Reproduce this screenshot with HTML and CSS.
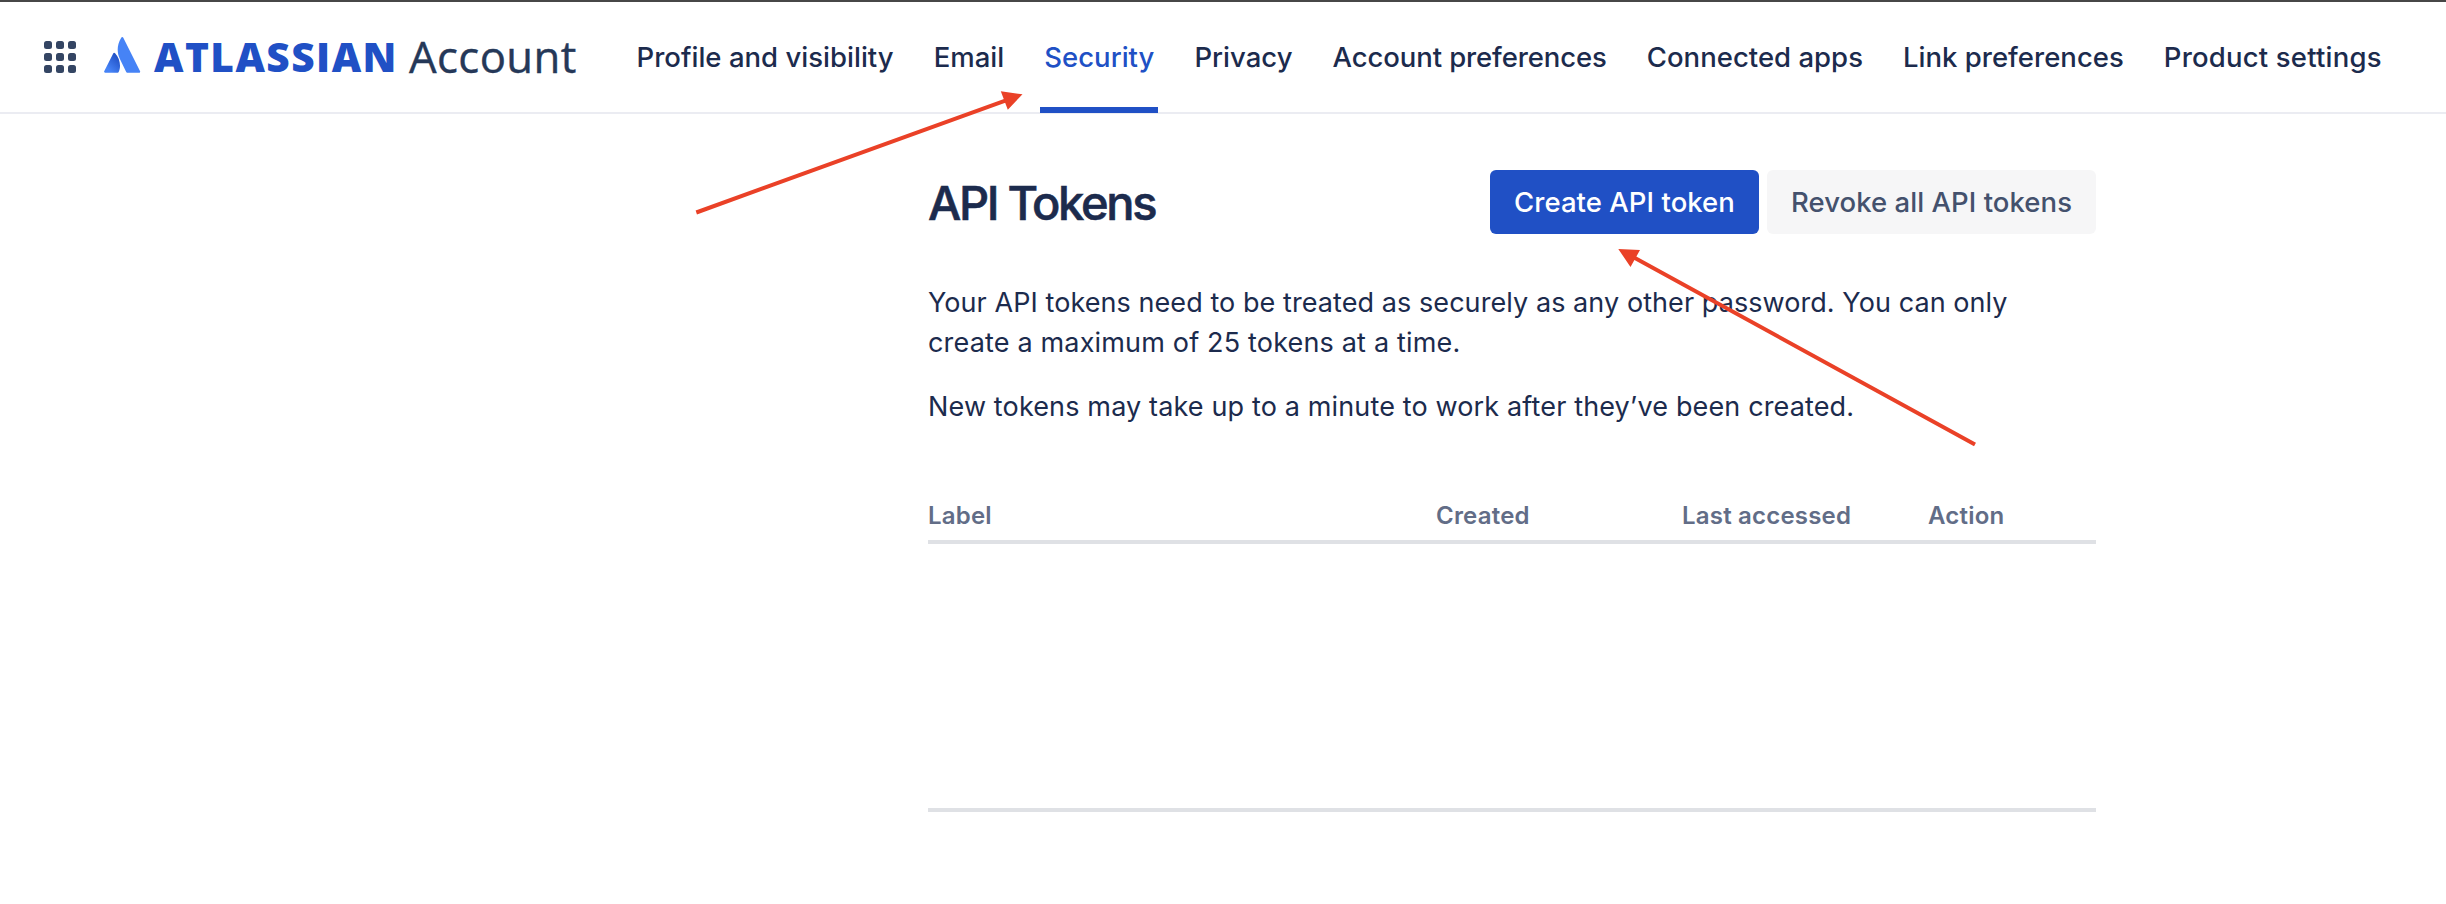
FILE: index.html
```
<!DOCTYPE html>
<html lang="en">
<head>
<meta charset="utf-8">
<title>API Tokens</title>
<link rel="stylesheet" href="styles.css">
</head>
<body>
<header class="topbar">
  <svg class="switcher" width="32" height="32" viewBox="0 0 32 32"><rect x="0" y="0" width="8" height="8" rx="2.5"/><rect x="12" y="0" width="8" height="8" rx="2.5"/><rect x="24" y="0" width="8" height="8" rx="2.5"/><rect x="0" y="12" width="8" height="8" rx="2.5"/><rect x="12" y="12" width="8" height="8" rx="2.5"/><rect x="24" y="12" width="8" height="8" rx="2.5"/><rect x="0" y="24" width="8" height="8" rx="2.5"/><rect x="12" y="24" width="8" height="8" rx="2.5"/><rect x="24" y="24" width="8" height="8" rx="2.5"/></svg>
  <svg class="logo" width="37" height="36" viewBox="0 0 37 36">
    <defs><linearGradient id="fold" x1="0.9" y1="0.2" x2="0.35" y2="0.9"><stop offset="0" stop-color="#2050c5"/><stop offset="1" stop-color="#4683f6"/></linearGradient></defs>
    <path fill="url(#fold)" d="M11.1 16.3c-.6-.7-1.5-.7-1.9.2L.2 34.3c-.3.7.1 1.4.9 1.4h12.6c.4 0 .8-.2 1-.6 2.7-5.6 1.1-14.1-3.6-18.8z"/>
    <path fill="#4683f6" d="M17.2.7c-4.6 7.3-4.3 15.3-1.3 21.4l6.3 13c.2.4.6.6 1 .6h12c.8 0 1.2-.8.9-1.4L19.3.7c-.4-.9-1.6-.9-2.1 0z"/>
  </svg>
  <span class="brand">ATLASSIAN</span>
  <span class="product">Account</span>
  <nav class="nav">
    <a class="tab">Profile and visibility</a>
    <a class="tab">Email</a>
    <a class="tab tab-active">Security</a>
    <a class="tab">Privacy</a>
    <a class="tab tab-tight">Account preferences</a>
    <a class="tab">Connected apps</a>
    <a class="tab">Link preferences</a>
    <a class="tab tab-loose">Product settings</a>
  </nav>
</header>
<main class="content">
  <div class="heading">
    <h1 class="title">API Tokens</h1>
    <div class="actions">
      <button class="button primary">Create API token</button>
      <button class="button subtle">Revoke all API tokens</button>
    </div>
  </div>
  <p class="text">Your API tokens need to be treated as securely as any other password. You can only<br><span class="second-line">create a maximum of 25 tokens at a time.</span></p>
  <p class="text note">New tokens may take up to a minute to work after they’ve been created.</p>
  <div class="table">
    <div class="table-head"><span>Label</span><span>Created</span><span>Last accessed</span><span>Action</span></div>
    <div class="table-body"></div>
  </div>
</main>
<svg class="arrows" width="2446" height="904" viewBox="0 0 2446 904">
  <path class="shaft" d="M696.3 212.5L1006 100.3M1975 444.5L1634 257.5"/>
  <path class="tip" d="M1022.5 94.3L1000.8 91.3L1007.8 109.7zM1618.3 249L1640 250L1630.5 267z"/>
</svg>
</body>
</html>
```
FILE: styles.css
```
body {
  margin: 0;
  background: #fff;
  color: #1c2b4d;
  font-family: Inter, sans-serif;
}

.topbar {
  box-sizing: border-box;
  display: flex;
  align-items: center;
  height: 114px;
  padding-left: 44px;
  border-top: 2px solid #474747;
  border-bottom: 2px solid #ebecf2;
  white-space: nowrap;
}

.switcher { fill: #344563; }
.logo { margin: -5px 0 0 28px; }

.brand,
.product {
  font-family: "Open Sans", "Noto Sans", sans-serif;
  line-height: 60px;
}

.brand {
  width: 255px;
  margin-top: -1px;
  margin-left: 13px;
  color: #2050c5;
  font-size: 40.6px;
  font-weight: 800;
  letter-spacing: 1.45px;
}

.product {
  width: 226px;
  margin-top: -3px;
  color: #253858;
  font-size: 43.7px;
  letter-spacing: .4px;
  -webkit-text-stroke: .4px #253858;
}

.nav {
  display: flex;
  align-self: stretch;
  gap: 32px;
  margin-bottom: -1px;
  margin-left: -2.5px;
}

.tab {
  box-sizing: border-box;
  height: 111px;
  padding: 0 4px;
  border-bottom: 6px solid transparent;
  font-size: 27.5px;
  font-weight: 500;
  letter-spacing: .02px;
  line-height: 110px;
}

.tab-tight { letter-spacing: -.1px; }
.tab-loose { letter-spacing: .2px; }

.tab-active {
  border-bottom-color: #2050c5;
  border-radius: 2px 2px 0 0;
  color: #2050c5;
}

.content {
  width: 1168px;
  margin-left: 928px;
  padding-top: 56px;
}

.heading {
  display: flex;
  align-items: center;
  justify-content: space-between;
  height: 64px;
  margin-bottom: 49px;
}

.title {
  margin: 1px 0 0;
  font-size: 47px;
  font-weight: 500;
  letter-spacing: -2.35px;
  -webkit-text-stroke: .6px #1c2b4d;
}

.actions { display: flex; gap: 8px; }

.button {
  height: 64px;
  padding: 0;
  border: 0;
  border-radius: 6px;
  font: 500 27.5px/64px Inter, sans-serif;
  letter-spacing: .05px;
}

.primary { width: 269px; background: #2050c5; color: #fff; }
.subtle { width: 329px; background: #f6f6f7; color: #44516d; }

.text {
  margin: 0 0 24px;
  font-size: 27px;
  letter-spacing: .07px;
  line-height: 40px;
  white-space: nowrap;
}

.second-line { letter-spacing: .17px; }
.note { letter-spacing: .14px; }

.table {
  margin-top: 65px;
}

.table-head {
  display: grid;
  grid-template-columns: 508px 246px 246px 168px;
  height: 48px;
  border-bottom: 4px solid #dfe1e5;
  color: #626d87;
  font-size: 24px;
  font-weight: 600;
  letter-spacing: .2px;
  line-height: 48px;
}

.table-body {
  height: 264px;
  border-bottom: 4px solid #dfe1e5;
}

.arrows {
  position: absolute;
  top: 0;
  left: 0;
  pointer-events: none;
}

.shaft { fill: none; stroke: #ea4127; stroke-width: 4; }
.tip { fill: #ea4127; }
```
